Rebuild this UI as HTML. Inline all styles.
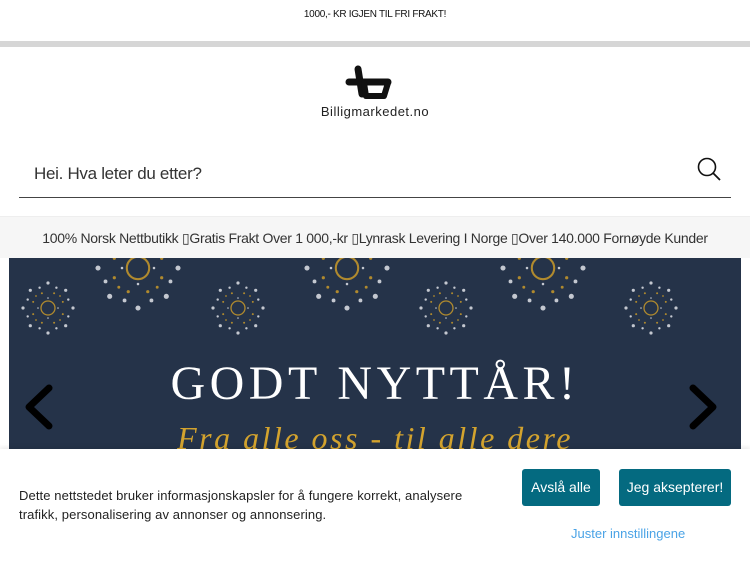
<!DOCTYPE html>
<html><head><meta charset="utf-8"><style>
*{margin:0;padding:0;box-sizing:border-box}
body{width:750px;height:563px;overflow:hidden;background:#fff;font-family:"Liberation Sans",sans-serif;position:relative;color:#222}
.top{position:absolute;top:0;left:0;width:750px;height:41px;text-align:center;font-size:10px;line-height:29px;letter-spacing:-0.3px;color:#111}
.band{position:absolute;top:41px;left:0;width:750px;height:6px;background:#d6d6d6}
.logo{position:absolute;top:64px;left:0;width:750px;text-align:center}
.logo .t{position:absolute;top:40px;left:0;width:750px;text-align:center;font-size:13px;letter-spacing:0.5px;color:#222}
.search{position:absolute;top:164px;left:34px;font-size:17px;color:#333;letter-spacing:-0.3px}
.line{position:absolute;top:197px;left:19px;width:712px;height:1px;background:#444}
.usp{position:absolute;top:216px;left:0;width:750px;height:42px;background:#f6f6f6;border-top:1px solid #eee;text-align:center;font-size:14px;line-height:42px;color:#333;letter-spacing:-0.3px}
.banner{position:absolute;top:258px;left:9px;width:732px;height:191px;background:#253349;overflow:hidden}
.g{position:absolute;top:98px;left:0;width:732px;text-align:center;font-family:"Liberation Serif",serif;font-size:48px;color:#fff;letter-spacing:4.5px}
.f{position:absolute;top:162px;left:0;width:732px;text-align:center;font-family:"Liberation Serif",serif;font-style:italic;font-size:32px;color:#d3a32e;letter-spacing:2.5px}
.cookie{position:absolute;top:449px;left:0;width:750px;height:114px;background:#fff;box-shadow:0 -2px 4px rgba(0,0,0,.08)}
.ct{position:absolute;top:37px;left:19px;font-size:13px;line-height:19px;color:#222;letter-spacing:0.1px}
.btn{position:absolute;top:20px;height:37px;background:#046a80;color:#fff;border-radius:3px;font-size:14px;line-height:37px;text-align:center}
.lnk{position:absolute;top:77px;left:571px;font-size:13px;color:#4aa3e6}
</style></head><body>
<div class="top">1000,- KR IGJEN TIL FRI FRAKT!</div>
<div class="band"></div>
<div class="logo">
<svg width="750" height="40"><g fill="none" stroke="#111" stroke-linecap="round" stroke-linejoin="round"><line x1="358" y1="5" x2="362" y2="30" stroke-width="7"/><line x1="349" y1="18" x2="388" y2="18" stroke-width="7"/><path d="M364 19 L366 32 L384 32 L388 19" stroke-width="6"/></g></svg>
<div class="t">Billigmarkedet.no</div></div>
<div class="search">Hei. Hva leter du etter?</div>
<svg style="position:absolute;top:156px;left:696px" width="26" height="26"><circle cx="11" cy="11" r="8.5" fill="none" stroke="#111" stroke-width="1.6"/><line x1="17" y1="17" x2="24" y2="24" stroke="#111" stroke-width="1.8"/></svg>
<div class="line"></div>
<div class="usp">100% Norsk Nettbutikk ▯Gratis Frakt Over 1 000,-kr ▯Lynrask Levering I Norge ▯Over 140.000 Fornøyde Kunder</div>
<div class="banner">
<svg width="732" height="191" style="position:absolute;top:0;left:0">
<defs><g id="fw">
<circle r="7" fill="none" stroke="#b08a2e" stroke-width="1.3"/>
<g fill="#c4c8d0"><circle cx="25" cy="0" r="1.6"/><circle cx="17.7" cy="17.7" r="1.6"/><circle cx="0" cy="25" r="1.6"/><circle cx="-17.7" cy="17.7" r="1.6"/><circle cx="-25" cy="0" r="1.6"/><circle cx="-17.7" cy="-17.7" r="1.6"/><circle cx="0" cy="-25" r="1.6"/><circle cx="17.7" cy="-17.7" r="1.6"/>
<circle cx="20.3" cy="8.4" r="1.2"/><circle cx="8.4" cy="20.3" r="1.2"/><circle cx="-8.4" cy="20.3" r="1.2"/><circle cx="-20.3" cy="8.4" r="1.2"/><circle cx="-20.3" cy="-8.4" r="1.2"/><circle cx="-8.4" cy="-20.3" r="1.2"/><circle cx="8.4" cy="-20.3" r="1.2"/><circle cx="20.3" cy="-8.4" r="1.2"/>
<circle cx="10" cy="0" r=".8"/><circle cx="-10" cy="0" r=".8"/><circle cx="0" cy="10" r=".8"/><circle cx="0" cy="-10" r=".8"/></g>
<g fill="#b08a2e"><circle cx="14.8" cy="6.1" r="1"/><circle cx="6.1" cy="14.8" r="1"/><circle cx="-6.1" cy="14.8" r="1"/><circle cx="-14.8" cy="6.1" r="1"/><circle cx="-14.8" cy="-6.1" r="1"/><circle cx="-6.1" cy="-14.8" r="1"/><circle cx="6.1" cy="-14.8" r="1"/><circle cx="14.8" cy="-6.1" r="1"/>
<circle cx="12" cy="12" r=".9"/><circle cx="-12" cy="12" r=".9"/><circle cx="-12" cy="-12" r=".9"/><circle cx="12" cy="-12" r=".9"/></g>
</g></defs>
<use href="#fw" x="39" y="50"/><use href="#fw" x="229" y="50"/><use href="#fw" x="437" y="50"/><use href="#fw" x="642" y="50"/>
<use href="#fw" transform="translate(129 10) scale(1.6)"/><use href="#fw" transform="translate(338 10) scale(1.6)"/><use href="#fw" transform="translate(534 10) scale(1.6)"/>
</svg>
<div class="g">GODT NYTTÅR!</div>
<div class="f">Fra alle oss - til alle dere</div>
<svg style="position:absolute;top:125px;left:12px" width="34" height="50"><path d="M28 5 L8 24 L28 43" fill="none" stroke="#000" stroke-width="7" stroke-linecap="round" stroke-linejoin="round"/></svg>
<svg style="position:absolute;top:125px;left:678px" width="34" height="50"><path d="M6 5 L26 24 L6 43" fill="none" stroke="#000" stroke-width="7" stroke-linecap="round" stroke-linejoin="round"/></svg>
</div>
<div class="cookie">
<div class="ct">Dette nettstedet bruker informasjonskapsler for å fungere korrekt, analysere<br>trafikk, personalisering av annonser og annonsering.</div>
<div class="btn" style="left:522px;width:78px">Avslå alle</div>
<div class="btn" style="left:619px;width:112px">Jeg aksepterer!</div>
<div class="lnk">Juster innstillingene</div>
</div>
</body></html>
